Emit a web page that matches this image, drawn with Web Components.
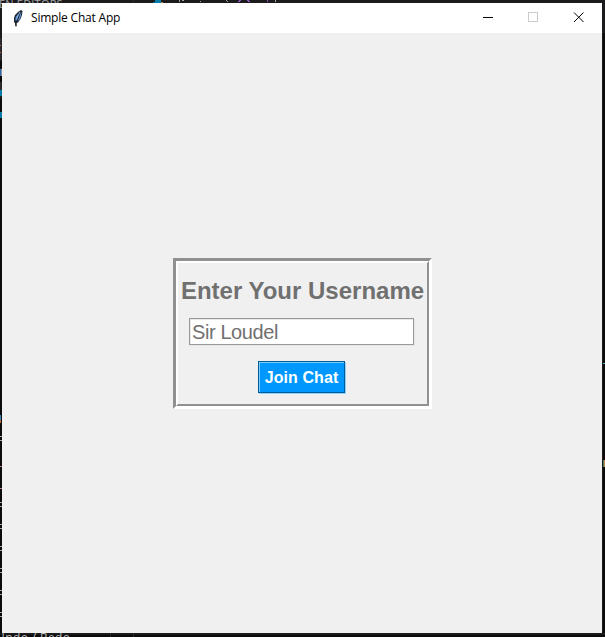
<!DOCTYPE html>
<html lang="en"><head><meta charset="utf-8"><title>Simple Chat App</title>
<style>html,body{margin:0;width:605px;height:637px;overflow:hidden;background:#1b1b1d}</style></head><body>
<desk-top>
<editor-backdrop slot="back"></editor-backdrop>
<app-window>
<title-bar slot="bar">Simple Chat App</title-bar>
<groove-frame>
<form-heading>Enter Your Username</form-heading>
<text-entry>Sir Loudel</text-entry>
<push-button>Join Chat</push-button>
</groove-frame>
</app-window>
</desk-top>
<script>
const define = (name, html) => customElements.define(name, class extends HTMLElement {
  constructor() { super(); this.attachShadow({mode: 'open'}).innerHTML = html; }
});
define('desk-top', `<style>:host{display:block;position:relative;box-sizing:border-box;width:605px;height:637px;padding:3px 3px 4px 2px}</style><slot name="back"></slot><slot></slot>`);

/* Slivers of the code editor visible around the window */
define('editor-backdrop', `<style>
:host{position:absolute;inset:0;overflow:hidden;background:#1b1b1d;font:11px/13px "Open Sans","Noto Sans",sans-serif;color:#a8a8a8}
span{position:absolute;white-space:pre}svg{position:absolute;inset:0}</style>
<svg width="605" height="637" shape-rendering="crispEdges">
<path fill="#0b0b0c" d="M0 61h2v7H0zM0 76h2v6H0zM0 99h2v14H0zM0 118h2v515H0zM603 33h2v600h-2zM0 635h605v2H0z"/>
<path fill="#28282d" d="M0 38h2v22H0zM0 82h2v8H0z"/>
<path fill="#b56a35" d="M0 45h1v1H0zM0 52h1v1H0z"/>
<path fill="#2869b0" d="M0 69h1v7H0z"/><path fill="#8e8e96" d="M1 69h1v7H1z"/>
<path fill="#0879a5" d="M0 90h2v6H0zM0 112h2v6H0z"/>
<path fill="#3f84b0" d="M0 415h1v5H0z"/><path fill="#b46a3c" d="M0 420h1v3H0z"/>
<path fill="#a4a4a4" d="M0 436h2v1H0zM0 440h2v1H0zM0 502h2v1H0zM0 506h2v1H0zM0 524h2v1H0zM0 528h2v1H0zM0 546h2v1H0zM0 550h2v1H0zM0 568h2v1H0zM0 572h2v1H0zM0 590h2v1H0zM0 594h2v1H0zM0 612h2v1H0zM0 616h2v1H0z"/>
<path fill="#b07f88" d="M0 466h2v1H0zM0 488h2v1H0z"/>
<path fill="#58a6b8" d="M603 363h2v1h-2z"/><path fill="#4c7668" d="M603 460h1v7h-1z"/><path fill="#c08c42" d="M604 460h1v7h-1z"/>
<path fill="#087ca8" d="M155 0h6v2h-6zM153 2h8v1h-8z"/><path fill="#a78b44" d="M161 2h2v1h-2z"/>
<path fill="#a0a0a0" d="M179 0h1v2h-1zM182 0h2v1h-2zM200 1h1v1h-1zM226 0h1v1h-1zM227 1h1v1h-1zM275 0h1v2h-1z"/>
<path fill="#8a57bd" d="M239 0h2v1h-2zM238 1h2v1h-2zM247 0h2v1h-2zM248 1h2v1h-2zM267 0h1v2h-1z"/>
<path fill="#29292c" d="M110 633h1v4h-1zM133 633h1v4h-1zM133 0h1v3h-1z"/>
</svg>
<span style="left:-1px;top:-3px;letter-spacing:.2px">EN EDITORS</span>
<span style="left:-4px;top:631px;font-size:12px;letter-spacing:.4px;color:#bababa">Undo / Redo</span>`);

define('app-window', `<style>:host{display:flex;flex-direction:column;position:relative;width:600px;height:630px;background:#f0f0f0}
.body{display:flex;align-items:center;justify-content:center;flex:1;padding:0 0 0 1px}</style><slot name="bar"></slot><div class="body"><slot></slot></div>`);

define('title-bar', `<style>:host{display:flex;align-items:center;height:30px;background:#fff;color:#000;font:12px/16px "Open Sans","Noto Sans",sans-serif}
.feather{margin:0 1px 1px 8px}.t{flex:1;padding:0 0 0 4px;white-space:nowrap;letter-spacing:-.2px}.controls{margin:0 14px 0 0;display:flex;gap:35px;padding:0 4px 2px 0}</style>
<svg class="feather" width="16" height="18" viewBox="0 0 16 18"><path d="M5.500 17.500L5 14l-1-1V9l1-3 3-3 3-2 1.500 1-.5 4-1.500 4L8 13.500l-1.500.5v3.500z" fill="#1b242e"/><path d="M5.500 12V8.500L8 5v3.500l-1.500 3zM8.500 9.500l1-5 2-2-.5 4-1.500 4-2 2z" fill="#5c97de"/><path d="M10 3L8 7 6.500 11.500" stroke="#a9cff5" fill="none"/><path d="M11 3L8 9l-2 4v4" stroke="#111a28" stroke-width=".8" fill="none"/></svg>
<span class="t"><slot></slot></span>
<div class="controls">
<svg width="10" height="10"><path d="M0 5.5h10" stroke="#000" shape-rendering="crispEdges"/></svg>
<svg width="10" height="10"><path d="M.5.5h9v9h-9z" fill="none" stroke="#ccc" shape-rendering="crispEdges"/></svg>
<svg width="11" height="11"><path d="M1 .5l9.500 9.500M10.500.5L1 10" stroke="#000" stroke-width="1"/></svg>
</div>`);

define('groove-frame', `<style>:host{display:block;box-sizing:border-box;width:259px;height:151px;border:3px solid;border-color:#909090 #fff #fff #909090}
.in{box-sizing:border-box;height:145px;border:2px solid;border-color:#fff #909090 #909090 #fff;display:flex;flex-direction:column;align-items:center;padding:14px 0 0}</style><div class="in"><slot></slot></div>`);

define('form-heading', `<style>:host{display:block;height:41px;font:bold 24px/28px "Liberation Sans",Arial,sans-serif;color:#707070;white-space:nowrap}</style><slot></slot>`);

define('text-entry', `<style>:host{display:block;box-sizing:border-box;width:225px;height:27px;margin:0 2px 16px 0;border:1px solid #999;background:#fff;padding:2px 0 0 2px;font:20px/23px "Liberation Sans",Arial,sans-serif;letter-spacing:-.4px;color:#707070;box-shadow:inset 1px 1px #e8e8e8,1px 1px #e6e6e6}</style><slot></slot>`);

define('push-button', `<style>:host{display:block;box-sizing:border-box;width:87px;height:32px;margin-right:2px;border:1px solid #005a94;background:#0098ff;color:#fff;font:bold 16px/31px "Liberation Sans",Arial,sans-serif;letter-spacing:.08px;text-align:center;box-shadow:inset 1px 1px #7cd0ff,1px 1px #8fd4ff;white-space:nowrap}</style><slot></slot>`);
</script></body></html>
